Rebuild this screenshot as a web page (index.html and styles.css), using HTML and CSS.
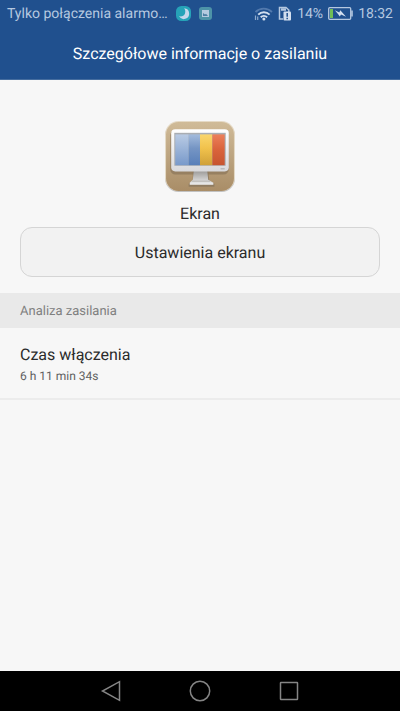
FILE: index.html
```html
<!DOCTYPE html>
<html lang="pl">
<head>
<meta charset="utf-8">
<meta name="viewport" content="width=device-width, initial-scale=1">
<title>Szczegółowe informacje o zasilaniu</title>
<link rel="stylesheet" href="styles.css">
</head>
<body>
<div class="screen">
  <header class="top">
    <div class="status">
      <div class="status-group">
        <span class="carrier">Tylko połączenia alarmo…</span>
        <svg width="15" height="15" viewBox="0 0 14 14" aria-hidden="true">
          <rect width="14" height="14" rx="5" fill="#26a3b8"/>
          <path d="M7.600 2.200A5 5 0 1 1 2.800 9.400C5 10.200 7.400 9.300 8.300 7.200 9 5.500 8.800 3.700 7.600 2.200Z" fill="#c6d8ec"/>
        </svg>
        <svg width="13" height="13" viewBox="0 0 13 13" aria-hidden="true">
          <rect width="13" height="13" rx="3" fill="#4d93a8"/>
          <rect x="3" y="3" width="7" height="7" fill="#b4cbe0"/>
          <path d="M4 9V6l2 1.500 1-.7L9 9Z" fill="#4d7fa3"/>
        </svg>
      </div>
      <div class="status-group status-right">
        <svg width="19" height="14" viewBox="0 0 19 14" aria-hidden="true">
          <g fill="none" stroke-linecap="butt">
            <path d="M1.500 5A12 12 0 0 1 18 5" stroke="#5279ad" stroke-width="1.800"/>
            <path d="M4.200 7.700A8 8 0 0 1 15.600 7.700" stroke="#d3dfef" stroke-width="1.900"/>
            <path d="M6.700 10.300A4.600 4.600 0 0 1 13.100 10.300" stroke="#d3dfef" stroke-width="1.900"/>
          </g>
          <circle cx="9.900" cy="12" r="1.500" fill="#d3dfef"/>
          <path d="M1.500 8.500V13M3.700 9.500V13" stroke="#8da9cd" stroke-width="1.200"/>
        </svg>
        <svg width="14" height="15" viewBox="0 0 14 15" aria-hidden="true">
          <path d="M5 13H1.500V1.500H8L10.800 4V6" fill="none" stroke="#b5c8e0" stroke-width="1.500"/>
          <path d="M3 3.500h5" stroke="#b5c8e0" stroke-width="2.500"/>
          <rect x="5.500" y="5.500" width="7.500" height="9" rx="1" fill="#d3dfef"/>
          <path d="M9.200 7v3.700M9.200 11.700v1.500" stroke="#20508e" stroke-width="1.500"/>
        </svg>
        <span>14%</span>
        <svg width="25" height="13" viewBox="0 0 25 13" aria-hidden="true">
          <rect x=".7" y=".7" width="22" height="11.600" rx="1" fill="none" stroke="#b5c8e0" stroke-width="1.300"/>
          <path d="M24 3.500v6" stroke="#b5c8e0" stroke-width="1.600"/>
          <rect x="2" y="2" width="3" height="9" fill="#70bd55"/>
          <path d="M6.800 3.300 11.300 5.500 12.300 3.300 14.300 5.500 18 9.700 13 7.500 11.800 9.500 10 7Z" fill="#d3dfef"/>
        </svg>
        <span>18:32</span>
      </div>
    </div>
    <h1 class="title">Szczegółowe informacje o zasilaniu</h1>
  </header>

  <main class="content">
    <section class="app">
      <svg class="app-icon" width="72" height="72" viewBox="0 0 70 70" aria-hidden="true">
        <defs>
          <linearGradient id="tile" x2="0" y2="1"><stop stop-color="#d0bb98"/><stop offset="1" stop-color="#a98d67"/></linearGradient>
          <linearGradient id="frame" x2="0" y2="1"><stop stop-color="#ffffff"/><stop offset="1" stop-color="#d9d9dc"/></linearGradient>
          <linearGradient id="stand" x2="0" y2="1"><stop stop-color="#999795"/><stop offset="1" stop-color="#eeeeee"/></linearGradient>
          <linearGradient id="pale" x2="0" y2="1"><stop stop-color="#b9cbe4"/><stop offset="1" stop-color="#7899ca"/></linearGradient>
          <linearGradient id="blue" x2="0" y2="1"><stop stop-color="#a3bbdc"/><stop offset=".45" stop-color="#7595c4"/><stop offset="1" stop-color="#587fb9"/></linearGradient>
          <linearGradient id="gold" x2="0" y2="1"><stop stop-color="#fad66d"/><stop offset=".45" stop-color="#f1c24c"/><stop offset="1" stop-color="#cfa039"/></linearGradient>
          <linearGradient id="red" x2="0" y2="1"><stop stop-color="#ec805b"/><stop offset=".5" stop-color="#d9633b"/><stop offset="1" stop-color="#c75530"/></linearGradient>
        </defs>
        <rect x="1" y="1" width="68" height="68" rx="13" fill="#c1c1c1"/>
        <rect x="1" y="0" width="68" height="68" rx="13" fill="#e5dac6"/>
        <rect x="2" y="1" width="66" height="67" rx="12" fill="url(#tile)"/>
        <rect x="6" y="9" width="57" height="43" rx="5" fill="#836f55" opacity=".6"/>
        <path d="M28 48H43L44 58 49 61V64H24V61L28 58Z" fill="#85745d" opacity=".7"/>
        <path d="M29 48H42L43 57 48 60V62H25V60L28 57Z" fill="url(#stand)"/>
        <path d="M27 58.500H45" stroke="#b8b6b2"/>
        <rect x="7" y="8" width="56" height="41" rx="4" fill="url(#frame)"/>
        <rect x="10" y="11.500" width="50" height="32" fill="#a9adb2"/>
        <path d="M11 13H24V43H11Z" fill="url(#pale)"/>
        <path d="M24 13H35V43H24Z" fill="url(#blue)"/>
        <path d="M35 13H47V43H35Z" fill="url(#gold)"/>
        <path d="M47 13H59V43H47Z" fill="url(#red)"/>
        <path d="M55 46.500H59" stroke="#aaa"/>
      </svg>
      <h2 class="app-name">Ekran</h2>
      <button class="settings" type="button">Ustawienia ekranu</button>
    </section>
    <section>
      <h3 class="section-title">Analiza zasilania</h3>
      <dl class="row">
        <dt>Czas włączenia</dt>
        <dd>6 h 11 min 34s</dd>
      </dl>
    </section>
  </main>

  <nav class="navbar">
    <button class="nav-button" type="button" aria-label="Wstecz">
      <svg width="22" height="22" viewBox="0 0 22 22"><path d="M19.500 1.700V20.300L2.500 11Z"/></svg>
    </button>
    <button class="nav-button" type="button" aria-label="Ekran główny">
      <svg width="22" height="22" viewBox="0 0 22 22"><circle cx="11" cy="11" r="9.700"/></svg>
    </button>
    <button class="nav-button" type="button" aria-label="Ostatnie">
      <svg width="22" height="22" viewBox="0 0 22 22"><rect x="2.500" y="2.500" width="17" height="17" rx=".5"/></svg>
    </button>
  </nav>
</div>
</body>
</html>
```
FILE: styles.css
```css
* {
  box-sizing: border-box;
}

body {
  margin: 0;
  background: #f7f7f7;
  color: #2b2b2b;
  font-family: Roboto, "Noto Sans", sans-serif;
  font-size: 16px;
  text-rendering: geometricPrecision;
}

h1, h2, h3, dl, dd {
  margin: 0;
  font-weight: 400;
}

button {
  font: inherit;
  color: inherit;
  text-rendering: inherit;
}

.screen {
  display: flex;
  flex-direction: column;
  min-height: 100vh;
}

.top {
  background: #20508e;
  color: #fff;
  border-bottom: 1px solid #456d9f;
}

.status {
  display: flex;
  justify-content: space-between;
  align-items: center;
  height: 27px;
  padding: 0 7px;
  color: #b5c8e0;
  font-size: 14px;
  line-height: 18px;
}

.status-group {
  display: flex;
  align-items: center;
  gap: 8px;
}

.status-right {
  gap: 5px;
}

.carrier {
  white-space: nowrap;
}

.title {
  padding: 15px 16px 13px;
  font-size: 16px;
  line-height: 24px;
  text-align: center;
}

.content {
  flex: 1;
}

.app {
  display: flex;
  flex-direction: column;
  align-items: center;
  padding: 41px 20px 16px;
}

.app-name {
  padding: 9px 0 1px;
  font-size: 16px;
  line-height: 24px;
}

.settings {
  width: 100%;
  height: 50px;
  border: 1px solid #d5d5d5;
  border-radius: 12px;
  background: #f2f2f2;
}

.section-title {
  padding: 2px 20px 0;
  background: #e9e9e9;
  color: #808080;
  font-size: 13px;
  line-height: 33px;
}

.row {
  padding: 15px 20px 12px;
  border-bottom: 2px solid #ececec;
}

.row dt {
  line-height: 24px;
}

.row dd {
  color: #606060;
  font-size: 12px;
  line-height: 19px;
}

.navbar {
  display: flex;
  justify-content: center;
  height: 40px;
  background: #000;
}

.nav-button {
  display: flex;
  align-items: center;
  justify-content: center;
  width: 22.25%;
  padding: 0;
  border: 0;
  background: none;
}

.nav-button svg {
  fill: none;
  stroke: #858585;
  stroke-width: 1.5;
}
```
